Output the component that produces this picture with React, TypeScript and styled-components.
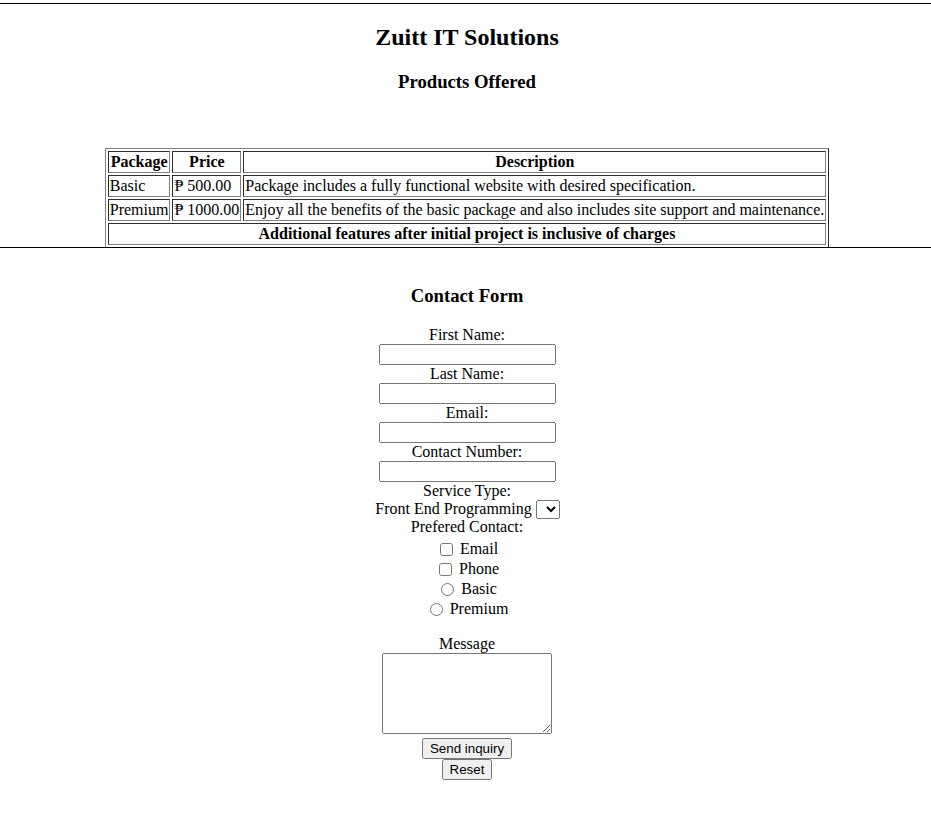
import React from "react";
import styled, { createGlobalStyle } from "styled-components";

const Global = createGlobalStyle`
  html, body {
    margin: 0;
    padding: 0;
    background: #ffffff;
  }
  body {
    font-family: "Liberation Serif", "DejaVu Serif", serif;
    font-size: 16px;
    color: #000000;
  }
`;

const Page = styled.div`
  display: flex;
  flex-direction: column;
  align-items: stretch;
  padding-top: 3px;
`;

const Section = styled.section`
  display: flex;
  flex-direction: column;
  align-items: center;
  padding-left: 3px;
`;

const Rule = styled.hr<{ $top?: number }>`
  position: relative;
  margin: ${(p) => p.$top ?? 0}px 0 0;
  border: none;
  border-top: 1px solid #000000;
  height: 0;
  width: 100%;
`;

const Title = styled.h1`
  margin: 19px 0 0;
  font-size: 24px;
  line-height: 28px;
  font-weight: bold;
  text-align: center;
`;

const SubTitle = styled.h3<{ $top: number }>`
  margin: ${(p) => p.$top}px 0 0;
  font-size: 18.72px;
  line-height: 22px;
  font-weight: bold;
  text-align: center;
`;

const Table = styled.table`
  margin: 55px 0 0;
  border: 1px outset #808080;
  border-collapse: separate;
  border-spacing: 2px;
  font-size: 16px;
`;

const Cell = styled.td<{ $bold?: boolean; $center?: boolean }>`
  border: 1px inset #808080;
  padding: 1px;
  line-height: 18px;
  white-space: nowrap;
  font-weight: ${(p) => (p.$bold ? "bold" : "normal")};
  text-align: ${(p) => (p.$center ? "center" : "left")};
`;

const Form = styled.form`
  margin-top: 19px;
  display: flex;
  flex-direction: column;
  align-items: center;
`;

const Label = styled.label`
  display: block;
  line-height: 18px;
  height: 18px;
  text-align: center;
`;

const TextInput = styled.input`
  width: 177px;
  height: 21px;
  margin: 0;
  box-sizing: border-box;
`;

const SelectRow = styled.div`
  display: flex;
  align-items: center;
  gap: 4px;
  height: 18px;
  line-height: 18px;
  padding-left: 1px;
`;

const Select = styled.select`
  width: 24px;
  height: 19px;
  margin: 0;
  padding: 0;
  font-size: 13px;
`;

const OptionRow = styled.div<{ $top?: number }>`
  display: flex;
  align-items: center;
  height: 20px;
  line-height: 20px;
  margin-top: ${(p) => p.$top ?? 0}px;
`;

const Box = styled.input`
  margin: 0 7px 0 4px;
  width: 13px;
  height: 13px;
`;

const Spacer = styled.div`
  height: 16px;
`;

const Message = styled.textarea`
  width: 170px;
  height: 81px;
  margin: 0;
  box-sizing: border-box;
  resize: both;
`;

const Button = styled.button<{ $top: number }>`
  margin: ${(p) => p.$top}px 0 0;
  font-family: Arial, "Liberation Sans", sans-serif;
  font-size: 13.33px;
  height: 21px;
  padding: 1px 6px;
`;

const rows = [
  {
    name: "Basic",
    price: "₱ 500.00",
    desc: "Package includes a fully functional website with desired specification.",
  },
  {
    name: "Premium",
    price: "₱ 1000.00",
    desc: "Enjoy all the benefits of the basic package and also includes site support and maintenance.",
  },
];

const fields = ["First Name:", "Last Name:", "Email:", "Contact Number:"];

export default function App() {
  return (
    <>
      <Global />
      <Page>
        <Rule />
        <Section>
          <Title>Zuitt IT Solutions</Title>
          <SubTitle $top={20}>Products Offered</SubTitle>
          <Table>
            <tbody>
              <tr>
                <Cell as="th" $bold $center>Package</Cell>
                <Cell as="th" $bold $center>Price</Cell>
                <Cell as="th" $bold $center>Description</Cell>
              </tr>
              {rows.map((r) => (
                <tr key={r.name}>
                  <Cell>{r.name}</Cell>
                  <Cell>{r.price}</Cell>
                  <Cell>{r.desc}</Cell>
                </tr>
              ))}
              <tr>
                <Cell as="th" colSpan={3} $bold $center>
                  Additional features after initial project is inclusive of charges
                </Cell>
              </tr>
            </tbody>
          </Table>
        </Section>
        <Rule $top={-1} />
        <Section>
          <SubTitle $top={37}>Contact Form</SubTitle>
          <Form onSubmit={(e) => e.preventDefault()}>
            {fields.map((f) => (
              <React.Fragment key={f}>
                <Label>{f}</Label>
                <TextInput type="text" />
              </React.Fragment>
            ))}
            <Label>Service Type:</Label>
            <SelectRow>
              <span>Front End Programming</span>
              <Select aria-label="Service Type"></Select>
            </SelectRow>
            <Label>Prefered Contact:</Label>
            <OptionRow $top={3}>
              <Box type="checkbox" />
              <span>Email</span>
            </OptionRow>
            <OptionRow>
              <Box type="checkbox" />
              <span>Phone</span>
            </OptionRow>
            <OptionRow>
              <Box type="radio" name="pkg" />
              <span>Basic</span>
            </OptionRow>
            <OptionRow>
              <Box type="radio" name="pkg" />
              <span>Premium</span>
            </OptionRow>
            <Spacer />
            <Label>Message</Label>
            <Message />
            <Button type="submit" $top={4}>Send inquiry</Button>
            <Button type="reset" $top={0}>Reset</Button>
          </Form>
        </Section>
      </Page>
    </>
  );
}
